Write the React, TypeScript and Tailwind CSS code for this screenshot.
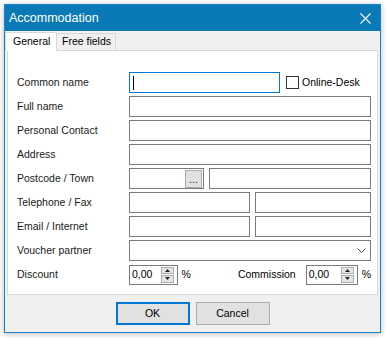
import React from "react";

const font = "font-['Liberation_Sans',Arial,sans-serif]";

function SpinBox({ width }: { width: string }) {
  return (
    <div className={`flex h-[20px] ${width} items-center border border-[#7a7a7a] bg-white pl-[2px] pr-[3px]`}>
      <span className="flex-1 text-[10.5px] text-black">0,00</span>
      <div className="flex h-[16px] w-[13px] flex-col gap-[1px]">
        <div className="flex flex-1 items-center justify-center border border-[#adadad] bg-[#e5e5e5]">
          <svg width="5" height="3" viewBox="0 0 5 3">
            <path d="M0 3 L2.5 0 L5 3 Z" fill="#222" />
          </svg>
        </div>
        <div className="flex flex-1 items-center justify-center border border-[#adadad] bg-[#e5e5e5]">
          <svg width="5" height="3" viewBox="0 0 5 3">
            <path d="M0 0 L2.5 3 L5 0 Z" fill="#222" />
          </svg>
        </div>
      </div>
    </div>
  );
}

function Field({ w }: { w: string }) {
  return <div className={`h-[21px] ${w} border border-[#7a7a7a] bg-white`} />;
}

function Row({ label, children }: { label: string; children: React.ReactNode }) {
  return (
    <div className="flex h-[21px] items-center">
      <span className="w-[112px] shrink-0">{label}</span>
      {children}
    </div>
  );
}

export default function App() {
  return (
    <div className={`h-[338px] w-[386px] bg-white pl-[4px] pt-[4px] text-[10.5px] text-[#1a1a1a] ${font}`}>
      <div className="flex h-[329px] w-[377px] flex-col border border-[#1883cc] bg-[#f0f0f0] shadow-[0_1px_6px_rgba(0,0,0,0.28)]">
        {/* title bar */}
        <div className="flex h-[26px] shrink-0 items-center justify-between bg-[#0a7ab6] pl-[4px] pr-[9px] text-white">
          <span className="text-[12.5px]">Accommodation</span>
          <svg width="11" height="11" viewBox="0 0 11 11">
            <path d="M0.5 0.5 L10.5 10.5 M10.5 0.5 L0.5 10.5" stroke="#fff" strokeWidth="1.1" />
          </svg>
        </div>

        {/* tabs */}
        <div className="flex h-[19px] shrink-0 items-end">
          <div className="relative z-10 -mb-px flex h-[19px] w-[52px] items-center border-x border-t border-[#d9d9d9] bg-white pl-[7px] text-black">
            General
          </div>
          <div className="flex h-[17px] w-[59px] items-center border-r border-t border-[#d9d9d9] bg-[#f0f0f0] pl-[5px] text-black">
            Free fields
          </div>
        </div>

        {/* panel */}
        <div className="mx-[2px] flex h-[245px] shrink-0 flex-col gap-[3px] border border-[#d9d9d9] bg-white pl-[9px] pr-[6px] pt-[21px]">
          <Row label="Common name">
            <div className="flex h-[21px] w-[151px] items-center border border-[#0078d7] bg-white pl-[3px]">
              <div className="h-[14px] w-px bg-black" />
            </div>
            <div className="ml-[6px] h-[13px] w-[13px] border border-[#333] bg-white" />
            <span className="ml-[3px] text-black">Online-Desk</span>
          </Row>
          <Row label="Full name">
            <Field w="w-[242px]" />
          </Row>
          <Row label="Personal Contact">
            <Field w="w-[242px]" />
          </Row>
          <Row label="Address">
            <Field w="w-[242px]" />
          </Row>
          <Row label="Postcode / Town">
            <div className="flex h-[21px] w-[75px] items-center justify-end border border-[#7a7a7a] bg-white pr-px">
              <div className="flex h-[18px] w-[17px] items-end justify-center border border-[#adadad] bg-[#e1e1e1] pb-[2px] text-[11px] leading-none text-[#2a1a6a]">
                ...
              </div>
            </div>
            <div className="ml-[5px]">
              <Field w="w-[162px]" />
            </div>
          </Row>
          <Row label="Telephone / Fax">
            <Field w="w-[121px]" />
            <div className="ml-[5px]">
              <Field w="w-[116px]" />
            </div>
          </Row>
          <Row label="Email / Internet">
            <Field w="w-[121px]" />
            <div className="ml-[5px]">
              <Field w="w-[116px]" />
            </div>
          </Row>
          <Row label="Voucher partner">
            <div className="flex h-[21px] w-[242px] items-center justify-end border border-[#7a7a7a] bg-white pr-[4px]">
              <svg width="9" height="5" viewBox="0 0 9 5">
                <path d="M0.5 0.5 L4.5 4.5 L8.5 0.5" stroke="#444" strokeWidth="1" fill="none" />
              </svg>
            </div>
          </Row>
          <Row label="Discount">
            <SpinBox width="w-[54px]" />
            <span className="ml-[4px] text-black">%</span>
            <span className="ml-[47px] text-black">Commission</span>
            <div className="ml-[10px]">
              <SpinBox width="w-[52px]" />
            </div>
            <span className="ml-[4px] text-black">%</span>
          </Row>
        </div>

        {/* footer */}
        <div className="flex flex-1 justify-center gap-[6px] pt-[7px]">
          <button className="flex h-[23px] w-[74px] items-center justify-center border-2 border-[#0078d7] bg-[#e1e1e1] text-black">
            OK
          </button>
          <button className="flex h-[23px] w-[74px] items-center justify-center border border-[#adadad] bg-[#e1e1e1] text-black">
            Cancel
          </button>
        </div>
      </div>
    </div>
  );
}
